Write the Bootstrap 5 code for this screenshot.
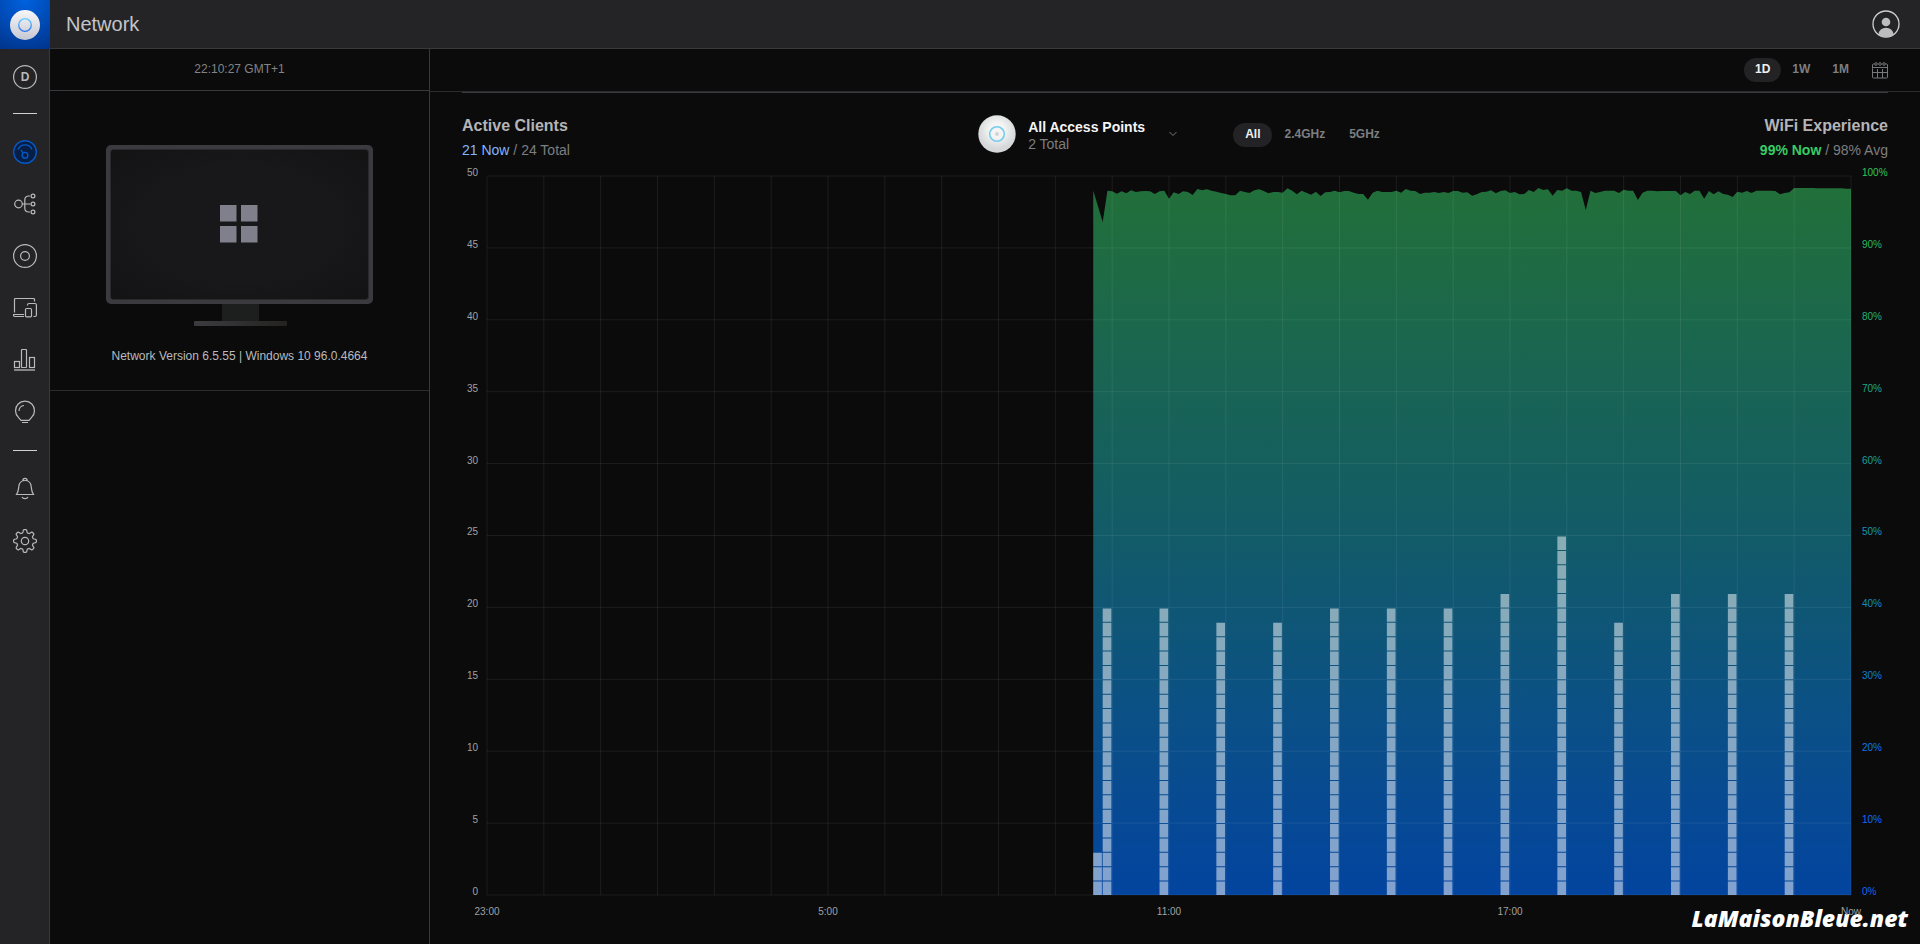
<!DOCTYPE html>
<html lang="en" data-bs-theme="dark">
<head>
<meta charset="utf-8">
<meta name="viewport" content="width=device-width, initial-scale=1">
<title>Network</title>
<link href="https://cdn.jsdelivr.net/npm/bootstrap@5.3.0/dist/css/bootstrap.min.css" rel="stylesheet">
<style>
:root { --line: #38383d; --panel: #242426; --ink: #b9babe; --dim: #7d7e80; }
body { background: #0b0b0b; color: var(--ink); font-family: "Liberation Sans", Arial, sans-serif; font-size: 14px; line-height: 18px; }
svg { display: block; }
.app-logo { width: 50px; height: 49px; background: radial-gradient(circle at 50% 0, #0062e0, #00348c); }
.side-rail { width: 50px; background: var(--panel); border-right: 1px solid var(--line); padding-top: 2px; }
.side-rail a { color: var(--ink); height: 24px; margin: 14px 0; }
.side-rail a.current { color: #0559c9; }
.side-rail hr { width: 24px; margin: 10px 0 12px; border-color: #d0d0d4; opacity: 1; }
.side-rail .rail-tools { margin-top: 2px; }
.side-rail svg { fill: none; stroke: currentColor; stroke-width: 1.2; }
.topbar { height: 49px; background: var(--panel); border-bottom: 1px solid var(--line); }
.topbar h1 { font-size: 20px; line-height: 24px; font-weight: 400; color: #c4c5c9; }
.info-panel { width: 380px; border-right: 1px solid var(--line); }
.clock { height: 42px; font-size: 12px; color: #828385; border-bottom: 1px solid var(--line); padding-bottom: 2px; }
.device { border-bottom: 1px solid #2c2c2f; padding: 54px 0 24px; }
.device p { font-size: 12px; line-height: 20px; margin: 20px 0 0; }
.range-bar { height: 43px; border-bottom: 1px solid #2c2c2f; }
.pill { border: 0; background: none; border-radius: 12px; height: 24px; padding: 0 12px 3px; font-size: 12px; font-weight: 700; line-height: 20px; color: var(--dim); }
.range-bar .pill { padding: 0 11px 3px; }
.pill.active { background: #232325; color: #f0f0f1; }
.cal-btn { border: 0; background: none; padding: 0; margin-left: 12px; color: #77787b; }
.report { border-top: 1px solid var(--line); margin: 0 32px 0 32px; }
.report-head { display: grid; grid-template-columns: 1fr auto 1fr; height: 83px; padding-top: 22px; }
.report-head h2 { font-size: 16px; line-height: 22px; font-weight: 700; margin: 0 0 4px; color: #b4b5b8; }
.ap-group { padding-left: 20px; }
.ap-btn { border: 0; background: none; padding: 0; line-height: 17px; margin-right: 56px; }
.chart { display: grid; grid-template-columns: 25px 1fr 37px; grid-template-rows: 1fr 49px; font-size: 10px; line-height: 12px; }
.scale { margin: -9px 0 -3px; }
.scale-l { padding-right: 9px; color: #a0a1a4; }
.scale-r { padding-left: 11px; }
.time-axis { display: flex; justify-content: space-between; margin: 11px -30px 0; color: #a0a1a4; }
.time-axis span { width: 60px; text-align: center; }
.plot { min-height: 300px; }
.site-mark { position: absolute; right: 12px; bottom: 12px; font: italic 800 23px/28px "Open Sans", sans-serif; color: #fff; }
</style>
</head>
<body>
<div class="d-flex flex-column min-vh-100 position-relative">
  <header class="d-flex">
    <a href="#" class="app-logo d-flex align-items-center justify-content-center" aria-label="Home">
      <svg width="32" height="32" viewBox="0 0 32 32"><defs><linearGradient id="disc" x2="0" y2="1"><stop stop-color="#f7f7f9"/><stop offset="1" stop-color="#c6c8d2"/></linearGradient><linearGradient id="ring" x2="0" y2="1"><stop stop-color="#5fd0ff"/><stop offset="1" stop-color="#2b74f0"/></linearGradient></defs><circle cx="16" cy="16" r="15" fill="url(#disc)"/><circle cx="16" cy="16" r="6.3" fill="none" stroke="url(#ring)" stroke-width="1.3"/></svg>
    </a>
    <div class="topbar flex-grow-1 d-flex align-items-center justify-content-between ps-3 pe-3">
      <h1 class="m-0">Network</h1>
      <button class="btn p-0 border-0 me-1" aria-label="Account">
        <svg width="28" height="28" viewBox="0 0 28 28"><defs><clipPath id="face"><circle cx="14" cy="14" r="13"/></clipPath></defs><circle cx="14" cy="14" r="13" fill="none" stroke="#cdced2" stroke-width="1.3"/><g fill="#bcbdc1" clip-path="url(#face)"><circle cx="14" cy="12" r="4.3"/><ellipse cx="14" cy="24" rx="7.3" ry="6.3"/></g></svg>
      </button>
    </div>
  </header>

  <div class="d-flex flex-grow-1">
    <nav class="side-rail d-flex flex-column align-items-center flex-shrink-0" aria-label="Main">
      <a href="#" aria-label="Site"><svg width="24" height="24" viewBox="0 0 24 24"><circle cx="12" cy="12" r="11.4"/><text x="12" y="16" text-anchor="middle" font-size="12" font-weight="700" fill="currentColor" stroke="none">D</text></svg></a>
      <hr>
      <a href="#" class="current" aria-label="Dashboard"><svg width="24" height="24" viewBox="0 0 24 24"><circle cx="12" cy="12" r="11.3" fill="#081f45" stroke-width="1.4"/><path d="M5 9.5a7.6 7.6 0 0 1 14 0M8 10.2l2.2 2.9" stroke-width="1.4"/><circle cx="12" cy="15.3" r="2.9" stroke-width="1.4"/></svg></a>
      <a href="#" aria-label="Topology"><svg width="24" height="24" viewBox="0 0 24 24"><circle cx="5.5" cy="12" r="3.8"/><circle cx="20" cy="4" r="1.9"/><circle cx="20" cy="12" r="1.9"/><circle cx="20" cy="20" r="1.9"/><path d="M9.3 12h8.2M17 4h-1.2q-4 0-4 4v8q0 4 4 4H17"/></svg></a>
      <a href="#" aria-label="Devices"><svg width="24" height="24" viewBox="0 0 24 24"><circle cx="12" cy="12" r="11.4"/><circle cx="12" cy="12" r="4.4"/></svg></a>
      <a href="#" aria-label="Clients"><svg width="24" height="24" viewBox="0 0 24 24"><path d="M21.500 5.500v-2q0-1-1-1h-18q-1 0-1 1v13M1 18.500h10M.5 18v1q0 1.500 1.500 1.500h9M14.500 9.500V9q0-1.500 1.500-1.500h6q1.400 0 1.400 1.500v10q0 1.500-1.500 1.500h-1.500"/><rect x="12.500" y="12.500" width="6" height="8.300" rx="1"/></svg></a>
      <a href="#" aria-label="Statistics"><svg width="24" height="24" viewBox="0 0 24 24"><rect x="1.500" y="13.500" width="5" height="6"/><rect x="8.500" y="1.500" width="5" height="18" rx=".5"/><rect x="16.500" y="9.500" width="5" height="10"/><path d="M1 22h21" stroke-width="1.300"/></svg></a>
      <a href="#" aria-label="Insights"><svg width="24" height="24" viewBox="0 0 24 24"><path d="M8 20.300 5.600 17.600A9.500 9.500 0 1 1 18.400 17.600L16 20.300zM9 22.500h6M6 11c0-3 2.200-5.300 5-5.500"/></svg></a>
      <div class="rail-tools d-flex flex-column align-items-center">
        <hr>
        <a href="#" aria-label="Alerts"><svg width="24" height="24" viewBox="0 0 24 24"><path d="M3.500 17.500C5.500 15 5.500 12 5.800 9.500 6.200 6 8.500 3.500 12 3.500s5.800 2.500 6.200 6c.3 2.500.3 5.500 2.300 8zM9.800 3.800c0-3.200 4.400-3.200 4.400 0M9 20c1 2.200 5 2.200 6 0"/></svg></a>
        <a href="#" aria-label="Settings"><svg width="24" height="24" viewBox="0 0 24 24"><path id="gear" stroke-linejoin="round"/><circle cx="12" cy="12" r="3.700"/></svg></a>
      </div>
    </nav>

    <aside class="info-panel flex-shrink-0">
      <div class="clock d-flex align-items-center justify-content-center">22:10:27 GMT+1</div>
      <div class="device text-center">
        <svg class="mx-auto" width="267" height="181" viewBox="0 0 267 181" role="img" aria-label="Windows console">
          <defs><linearGradient id="foot"><stop stop-color="#3c3c40"/><stop offset="1" stop-color="#242321"/></linearGradient><radialGradient id="screen" r=".75"><stop offset=".5" stop-color="#18181a"/><stop offset="1" stop-color="#121213"/></radialGradient></defs>
          <rect x="116" y="158" width="37" height="18" fill="#1d1e1e"/>
          <rect x="88" y="176" width="93" height="5" rx="1" fill="url(#foot)"/>
          <rect width="267" height="159" rx="5" fill="#3a3a3f"/>
          <rect x="4.500" y="4.500" width="258" height="150" rx="3" fill="url(#screen)" stroke="#2a2a2e"/>
          <path fill="#7f808b" d="M114 60h16.500v16.500H114zM135 60h16.500v16.500H135zM114 81h16.500v16.500H114zM135 81h16.500v16.500H135z"/>
        </svg>
        <p>Network Version 6.5.55 | Windows 10 96.0.4664</p>
      </div>
    </aside>

    <main class="flex-grow-1 d-flex flex-column">
      <div class="range-bar d-flex align-items-center justify-content-end px-3">
        <div class="d-flex align-items-center me-3">
          <button class="pill active">1D</button><button class="pill">1W</button><button class="pill">1M</button>
          <button class="cal-btn" aria-label="Pick dates"><svg width="16" height="17" viewBox="0 0 16 17" fill="none" stroke="currentColor"><path d="M.5 6.500V3q0-1 1-1h1m11 0h1q1 0 1 1v12q0 1-1 1h-13q-1 0-1-1V6.500M0 5.500h16M1 10.500h14M5.500 7v9M10.500 7v9"/><circle cx="4" cy="2" r="1.300"/><circle cx="8" cy="2" r="1.300"/><circle cx="12" cy="2" r="1.300"/></svg></button>
        </div>
      </div>

      <section class="report flex-grow-1 d-flex flex-column">
        <div class="report-head">
          <div>
            <h2>Active Clients</h2>
            <div style="color:var(--dim)"><span style="color:#85b4ff">21 Now</span> / 24 Total</div>
          </div>
          <div class="ap-group d-flex align-items-start">
            <button class="ap-btn d-flex align-items-center text-start">
              <svg width="38" height="38" viewBox="0 0 38 38"><defs><radialGradient id="dome" cy=".4"><stop offset=".4" stop-color="#f4f4f4"/><stop offset="1" stop-color="#d5d7d8"/></radialGradient></defs><circle cx="19" cy="19" r="18.700" fill="url(#dome)"/><circle cx="19" cy="19" r="7.300" fill="none" stroke="#77ccec" stroke-width="1.600"/><circle cx="19" cy="19" r="2" fill="#d2d2d2"/></svg>
              <span class="ms-2 ps-1 pt-1"><strong class="d-block" style="color:#f4f4f5">All Access Points</strong><span style="color:var(--dim)">2 Total</span></span>
              <svg class="ms-4" width="8" height="6" viewBox="0 0 8 6" fill="none" stroke="#77787b"><path d="M.5 1 4 4.500 7.500 1"/></svg>
            </button>
            <div class="d-flex pt-2"><button class="pill active">All</button><button class="pill">2.4GHz</button><button class="pill">5GHz</button></div>
          </div>
          <div class="text-end">
            <h2>WiFi Experience</h2>
            <div style="color:var(--dim)"><strong style="color:#38cc65">99% Now</strong> / 98% Avg</div>
          </div>
        </div>

        <div class="chart flex-grow-1">
          <div class="scale scale-l d-flex flex-column justify-content-between text-end" id="clientScale"></div>
          <div class="plot position-relative">
            <svg class="position-absolute w-100 h-100 overflow-visible" viewBox="0 0 4092 2157" preserveAspectRatio="none" role="img" aria-label="Clients and WiFi experience over one day">
              <defs><linearGradient id="wifi" gradientUnits="userSpaceOnUse" x1="0" y1="0" x2="0" y2="2157"><stop stop-color="#227038"/><stop offset=".5" stop-color="#125b68"/><stop offset=".75" stop-color="#0b5086"/><stop offset="1" stop-color="#03449f"/></linearGradient></defs>
              <polygon id="wifiArea" fill="url(#wifi)"/>
              <path id="grid" fill="none" stroke="#fff" stroke-opacity=".075" vector-effect="non-scaling-stroke"/>
              <path id="clientBars" fill="#fff" fill-opacity=".5"/>
            </svg>
          </div>
          <div class="scale scale-r d-flex flex-column justify-content-between" id="wifiScale"></div>
          <div></div>
          <div class="time-axis position-relative z-1"><span>23:00</span><span>5:00</span><span>11:00</span><span>17:00</span><span>Now</span></div>
          <div></div>
        </div>
      </section>
    </main>
  </div>
  <div class="site-mark">LaMaisonBleue.net</div>
</div>

<script src="https://cdn.jsdelivr.net/npm/bootstrap@5.3.0/dist/js/bootstrap.bundle.min.js"></script>
<script>
const W = 4092, H = 2157, STEP = W / 288;   // one step is five minutes
const el = id => document.getElementById(id);

// scales
const tints = ['#0b66ff','#0b6cf8','#0c78e4','#0d7fd2','#108dbc','#1597ab','#1a9f9b','#1ea888','#23b077','#28b966','#2fc656'];
for (let i = 10; i >= 0; i--) {
  el('clientScale').insertAdjacentHTML('beforeend', `<span>${i * 5}</span>`);
  el('wifiScale').insertAdjacentHTML('beforeend', `<span style="color:${tints[i]}">${i * 10}%</span>`);
}

// grid: 24 hours by 10 bands
let d = '';
for (let i = 0; i <= 24; i++) d += `M${i * W / 24} 0V${H}`;
for (let i = 0; i <= 10; i++) d += `M0 ${i * H / 10}H${W}`;
el('grid').setAttribute('d', d);

// WiFi experience: depth below 100%, one reading per step, starting at step 128
const dips = [44,91,138,44,46,53,46,52,43,48,46,45,46,54,46,44,68,49,54,46,48,57,39,43,40,44,47,51,54,58,58,44,48,51,43,40,45,52,48,48,
50,37,44,55,44,50,56,47,60,49,48,44,49,45,45,50,54,54,71,50,44,48,48,48,44,50,39,44,45,54,50,50,48,51,48,51,45,45,50,49,
59,55,48,47,43,52,45,43,51,48,55,54,42,48,36,42,40,59,42,44,37,44,44,48,102,44,51,48,44,44,44,51,41,44,44,72,50,44,44,46,
45,45,45,45,58,48,54,44,44,68,45,55,46,54,56,63,47,50,45,51,44,44,44,44,45,55,51,49,36,36,36,36,36,37,37,37,37,37,37,38,38];
const pts = dips.map((v, i) => `${((128 + i) * STEP).toFixed(1)},${v}`);
el('wifiArea').setAttribute('points', `${128 * STEP},${H} ${pts.join(' ')} ${W},${H}`);

// clients: one block per client, hourly
const unit = H / 50;
const bars = [[128, 3], ...[20,20,19,19,20,20,20,21,25,19,21,21,21].map((n, i) => [130 + i * 12, n])];
let b = '';
for (const [s, n] of bars)
  for (let k = 1; k <= n; k++)
    b += `M${s * STEP} ${H - k * unit + 3}h26v${unit - 3}h-26z`;
el('clientBars').setAttribute('d', b);

// gear outline: eight rounded teeth
let g = '';
for (let a = 0; a <= 360; a += 3) {
  const r = 9.900 + 1.500 * Math.tanh(2.500 * Math.cos(8 * a * Math.PI / 180));
  g += `${a ? 'L' : 'M'}${(12 + r * Math.sin(a * Math.PI / 180)).toFixed(2)} ${(12 - r * Math.cos(a * Math.PI / 180)).toFixed(2)}`;
}
el('gear').setAttribute('d', g + 'z');
</script>
</body>
</html>
